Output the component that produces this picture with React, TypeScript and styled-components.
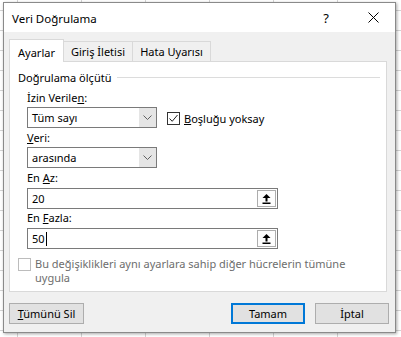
import React from 'react';
import styled, { createGlobalStyle } from 'styled-components';

const GlobalStyle = createGlobalStyle`
  html, body {
    margin: 0;
    padding: 0;
  }
  body {
    width: 401px;
    height: 337px;
    overflow: hidden;
    background-color: #ffffff;
    background-image:
      linear-gradient(to right, #d4d4d4 1px, transparent 1px),
      linear-gradient(to bottom, #d4d4d4 1px, transparent 1px);
    background-size: 64px 20px;
    background-position: 17px 10px;
    font-family: "Noto Sans", "Open Sans", sans-serif;
    font-size: 11px;
    color: #000;
  }
  #root {
    padding: 2px 0 0 3px;
  }
`;

const Dialog = styled.div`
  width: 393px;
  height: 331px;
  box-sizing: border-box;
  border: 1px solid #8a8a8a;
  background: #f0f0f0;
  display: flex;
  flex-direction: column;
  box-shadow: 1px 1px 3px rgba(0, 0, 0, 0.35);
`;

const TitleBar = styled.div`
  height: 29px;
  background: #ffffff;
  display: flex;
  align-items: center;
  padding: 0 10px 0 8px;
`;

const TitleText = styled.div`
  flex: 1;
  font-size: 11.5px;
  padding-top: 1px;
`;

const TitleButton = styled.div`
  width: 24px;
  height: 24px;
  display: flex;
  align-items: center;
  justify-content: center;
  font-size: 13px;
`;

const TitleControls = styled.div`
  display: flex;
  gap: 23px;
`;

const Body = styled.div`
  flex: 1;
  display: flex;
  flex-direction: column;
  padding: 7px 7px 0 5px;
`;

const TabRow = styled.div`
  display: flex;
  align-items: flex-end;
  height: 23px;
  position: relative;
  z-index: 1;
`;

const Tab = styled.div<{ $active?: boolean; $width: number }>`
  box-sizing: border-box;
  width: ${p => p.$width}px;
  height: ${p => (p.$active ? 23 : 21)}px;
  border: 1px solid #d9d9d9;
  border-bottom: ${p => (p.$active ? 'none' : '1px solid #d9d9d9')};
  margin-left: ${p => (p.$active ? 0 : -1)}px;
  background: ${p => (p.$active ? '#ffffff' : '#f0f0f0')};
  display: flex;
  align-items: center;
  justify-content: center;
  padding-top: ${p => (p.$active ? 2 : 0)}px;

  &:first-child {
    margin-left: 0;
  }
`;

const Panel = styled.div`
  box-sizing: border-box;
  width: 378px;
  height: 231px;
  margin-top: -1px;
  border: 1px solid #d9d9d9;
  background: #ffffff;
  padding: 7px 6px 0 8px;
`;

const GroupHeader = styled.div`
  display: flex;
  align-items: center;
  gap: 6px;
  height: 16px;

  &::after {
    content: '';
    flex: 1;
    height: 1px;
    background: #dcdcdc;
  }
`;

const Fields = styled.div`
  padding-left: 9px;
  padding-top: 5px;
  display: flex;
  flex-direction: column;
`;

const Label = styled.div`
  height: 16px;
  line-height: 16px;
`;

const Row = styled.div`
  display: flex;
  align-items: center;
  gap: 10px;
`;

const SelectBox = styled.div`
  box-sizing: border-box;
  width: 130px;
  height: 21px;
  border: 1px solid #7a7a7a;
  background: #ffffff;
  display: flex;
  margin: 1px 0 2px;
`;

const SelectValue = styled.div`
  flex: 1;
  padding-left: 4px;
  line-height: 19px;
`;

const SelectArrow = styled.div`
  width: 17px;
  background: #e5e5e5;
  display: flex;
  align-items: center;
  justify-content: center;
`;

const CheckLabel = styled.label<{ $disabled?: boolean }>`
  display: flex;
  align-items: flex-start;
  gap: 4px;
  color: ${p => (p.$disabled ? '#6d6d6d' : '#000')};
  line-height: ${p => (p.$disabled ? 14 : 13)}px;
`;

const CheckBox = styled.span<{ $disabled?: boolean }>`
  box-sizing: border-box;
  flex: none;
  width: 13px;
  height: 13px;
  margin-top: ${p => (p.$disabled ? 1 : 0)}px;
  border: 1px solid ${p => (p.$disabled ? '#bcbcbc' : '#333333')};
  background: #ffffff;
  display: flex;
  align-items: center;
  justify-content: center;
`;

const InputBox = styled.div`
  box-sizing: border-box;
  width: 251px;
  height: 21px;
  border: 1px solid #7a7a7a;
  background: #ffffff;
  display: flex;
  margin: 2px 0 1px;
`;

const InputValue = styled.div`
  flex: 1;
  padding-left: 4px;
  line-height: 19px;
  display: flex;
  align-items: center;
`;

const Caret = styled.span`
  display: inline-block;
  width: 1px;
  height: 14px;
  background: #000;
  margin-left: 1px;
`;

const CollapseButton = styled.div`
  box-sizing: border-box;
  width: 19px;
  margin: 1px;
  border: 1px solid #adadad;
  background: #fdfdfd;
  display: flex;
  align-items: center;
  justify-content: center;
`;

const ApplyAll = styled.div`
  margin-top: 7px;
`;

const Footer = styled.div`
  display: flex;
  align-items: center;
  margin: 11px -1px 0 0;
`;

const Spacer = styled.div`
  flex: 1;
`;

const Button = styled.div<{ $default?: boolean; $width: number; $gap?: number }>`
  box-sizing: border-box;
  width: ${p => p.$width}px;
  height: 21px;
  margin-left: ${p => p.$gap ?? 0}px;
  border: ${p => (p.$default ? '2px solid #0078d7' : '1px solid #adadad')};
  background: #e1e1e1;
  display: flex;
  align-items: center;
  justify-content: center;
`;

const Chevron = () => (
  <svg width="9" height="5" viewBox="0 0 9 5">
    <path d="M0.5 0.5 L4.5 4.5 L8.5 0.5" fill="none" stroke="#606060" strokeWidth="1" />
  </svg>
);

const UpArrow = () => (
  <svg width="9" height="10" viewBox="0 0 9 10">
    <path d="M4.5 0 L8.5 4 H5.5 V7.5 H3.5 V4 H0.5 Z" fill="#000" />
    <rect x="0.5" y="8.5" width="8" height="1.5" fill="#000" />
  </svg>
);

const CloseIcon = () => (
  <svg width="11" height="11" viewBox="0 0 11 11">
    <path d="M0.5 0.5 L10.5 10.5 M10.5 0.5 L0.5 10.5" stroke="#000" strokeWidth="1" />
  </svg>
);

const CheckMark = () => (
  <svg width="11" height="11" viewBox="0 0 11 11">
    <path d="M1.5 5.5 L4.2 8.3 L9.5 2" fill="none" stroke="#222" strokeWidth="1" />
  </svg>
);

export default function App() {
  return (
    <>
      <GlobalStyle />
      <Dialog>
        <TitleBar>
          <TitleText>Veri Doğrulama</TitleText>
          <TitleControls>
            <TitleButton>?</TitleButton>
            <TitleButton>
              <CloseIcon />
            </TitleButton>
          </TitleControls>
        </TitleBar>

        <Body>
          <TabRow>
            <Tab $active $width={55}>Ayarlar</Tab>
            <Tab $width={70}>Giriş İletisi</Tab>
            <Tab $width={79}>Hata Uyarısı</Tab>
          </TabRow>

          <Panel>
            <GroupHeader>Doğrulama ölçütü</GroupHeader>
            <Fields>
              <Label>
                İzin Verile<u>n</u>:
              </Label>
              <Row>
                <SelectBox>
                  <SelectValue>Tüm sayı</SelectValue>
                  <SelectArrow>
                    <Chevron />
                  </SelectArrow>
                </SelectBox>
                <CheckLabel>
                  <CheckBox>
                    <CheckMark />
                  </CheckBox>
                  <span>
                    <u>B</u>oşluğu yoksay
                  </span>
                </CheckLabel>
              </Row>

              <Label>
                <u>V</u>eri:
              </Label>
              <SelectBox>
                <SelectValue>arasında</SelectValue>
                <SelectArrow>
                  <Chevron />
                </SelectArrow>
              </SelectBox>

              <Label>
                En <u>A</u>z:
              </Label>
              <InputBox>
                <InputValue>20</InputValue>
                <CollapseButton>
                  <UpArrow />
                </CollapseButton>
              </InputBox>

              <Label>
                En <u>F</u>azla:
              </Label>
              <InputBox>
                <InputValue>
                  50
                  <Caret />
                </InputValue>
                <CollapseButton>
                  <UpArrow />
                </CollapseButton>
              </InputBox>
            </Fields>

            <ApplyAll>
              <CheckLabel $disabled>
                <CheckBox $disabled />
                <span>
                  Bu değişiklikleri aynı ayarlara sahip diğer hücrelerin tümüne
                  <br />
                  uygula
                </span>
              </CheckLabel>
            </ApplyAll>
          </Panel>

          <Footer>
            <Button $width={75}>
              <span>
                <u>T</u>ümünü Sil
              </span>
            </Button>
            <Spacer />
            <Button $default $width={74}>
              Tamam
            </Button>
            <Button $width={74} $gap={10}>
              İptal
            </Button>
          </Footer>
        </Body>
      </Dialog>
    </>
  );
}
